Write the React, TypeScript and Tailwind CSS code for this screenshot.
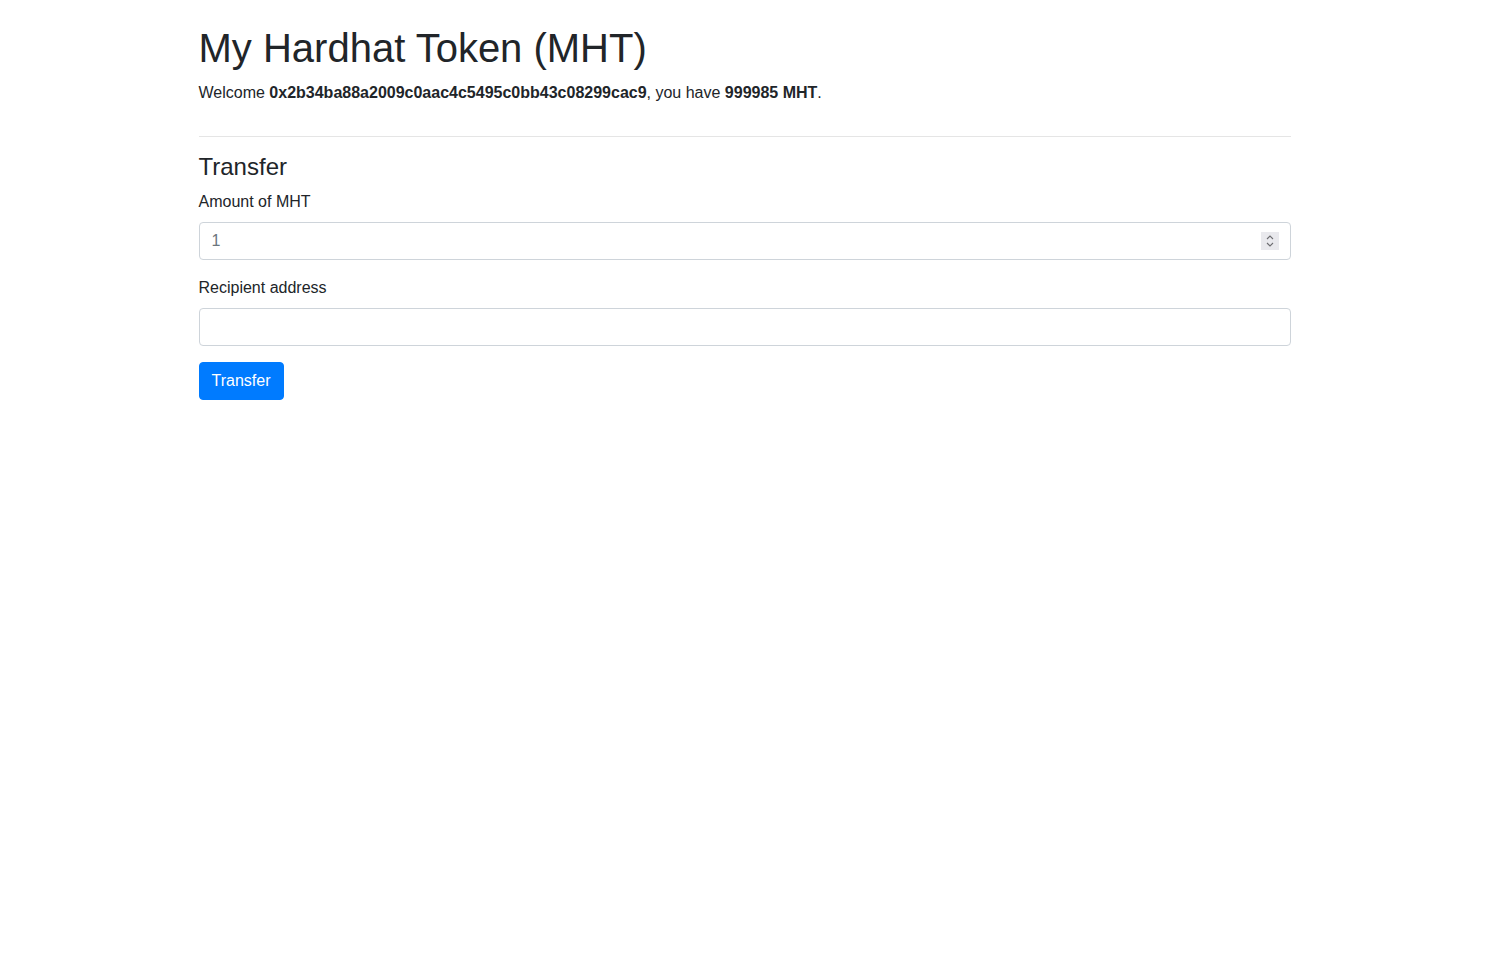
import React, { useState } from 'react';

const FONT = "font-['Liberation_Sans',Arial,sans-serif]";

const App: React.FC = () => {
  const [amount, setAmount] = useState('');
  const [to, setTo] = useState('');

  return (
    <div className={`min-h-screen bg-white text-[#212529] ${FONT} text-[16px] leading-[1.5]`}>
      <div className="mx-auto max-w-[1140px] p-6">
        {/* Header */}
        <h1 className="mb-2 text-[40px] font-normal leading-[1.2]">My Hardhat Token (MHT)</h1>
        <p className="mb-4 pt-px">
          Welcome <b className="font-bold">0x2b34ba88a2009c0aac4c5495c0bb43c08299cac9</b>, you have{' '}
          <b className="font-bold">999985 MHT</b>.
        </p>

        <hr className="mt-[31px] mb-4 border-t border-black/10" />

        {/* Transfer form */}
        <h4 className="mb-2 text-[24px] font-normal leading-[1.2]">Transfer</h4>
        <form onSubmit={(e) => e.preventDefault()}>
          <div className="mb-4">
            <label className="mb-2 inline-block">Amount of MHT</label>
            <div className="relative">
              <input
                type="text"
                value={amount}
                onChange={(e) => setAmount(e.target.value)}
                placeholder="1"
                className="block h-[38px] w-full rounded border border-[#ced4da] bg-white px-3 py-1.5 text-[16px] text-[#495057] placeholder:text-[#6c757d] focus:outline-none"
              />
              <div className="pointer-events-none absolute right-3 top-[10px] flex h-[18px] w-[18px] flex-col items-center justify-center bg-[#e9e9ed]">
                <svg width="8" height="14" viewBox="0 0 8 14" fill="none" stroke="#6c6c70" strokeWidth="1.1">
                  <path d="M1 5 L4 2 L7 5" />
                  <path d="M1 9 L4 12 L7 9" />
                </svg>
              </div>
            </div>
          </div>
          <div className="mb-4">
            <label className="mb-2 inline-block">Recipient address</label>
            <input
              type="text"
              value={to}
              onChange={(e) => setTo(e.target.value)}
              className="block h-[38px] w-full rounded border border-[#ced4da] bg-white px-3 py-1.5 text-[16px] text-[#495057] focus:outline-none"
            />
          </div>
          <div>
            <button
              type="submit"
              className="h-[38px] w-[85px] rounded border border-[#007bff] bg-[#007bff] text-[16px] text-white hover:bg-[#0069d9]"
            >
              Transfer
            </button>
          </div>
        </form>
      </div>
    </div>
  );
};

export default App;
